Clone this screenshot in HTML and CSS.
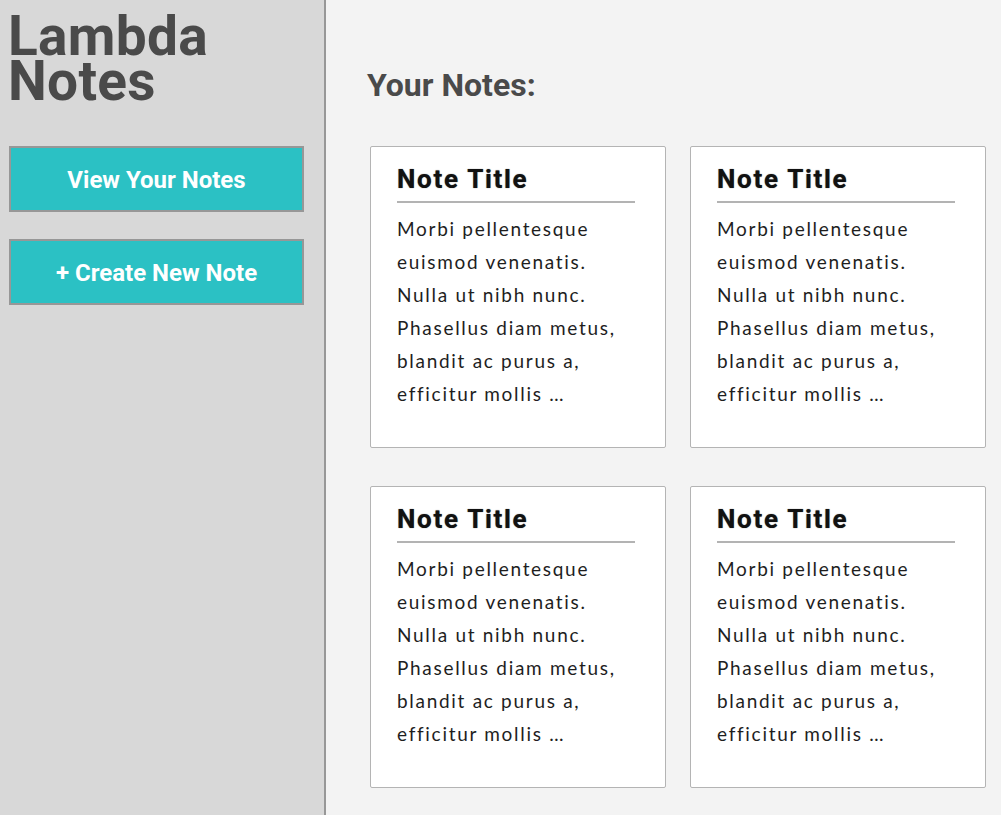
FILE: index.html
```html
<!DOCTYPE html>
<html>
<head>
<meta charset="utf-8">
<title>Lambda Notes</title>
<link rel="stylesheet" href="styles.css">
</head>
<body>
<div class="app">
  <aside class="sidebar">
    <h1 class="brand">Lambda<br>Notes</h1>
    <button class="nav-btn">View Your Notes</button>
    <button class="nav-btn">+ Create New Note</button>
  </aside>
  <main class="main">
    <h2 class="heading">Your Notes:</h2>
    <div class="grid">
      <div class="card">
        <h3 class="card-title">Note Title</h3>
        <p class="card-text">Morbi pellentesque euismod venenatis. Nulla ut nibh nunc. Phasellus diam metus, blandit ac purus a, efficitur mollis …</p>
      </div>
      <div class="card">
        <h3 class="card-title">Note Title</h3>
        <p class="card-text">Morbi pellentesque euismod venenatis. Nulla ut nibh nunc. Phasellus diam metus, blandit ac purus a, efficitur mollis …</p>
      </div>
      <div class="card">
        <h3 class="card-title">Note Title</h3>
        <p class="card-text">Morbi pellentesque euismod venenatis. Nulla ut nibh nunc. Phasellus diam metus, blandit ac purus a, efficitur mollis …</p>
      </div>
      <div class="card">
        <h3 class="card-title">Note Title</h3>
        <p class="card-text">Morbi pellentesque euismod venenatis. Nulla ut nibh nunc. Phasellus diam metus, blandit ac purus a, efficitur mollis …</p>
      </div>
    </div>
  </main>
</div>
</body>
</html>
```

FILE: styles.css
```css
* { box-sizing: border-box; }
html, body { margin: 0; padding: 0; }
body {
  font-family: Roboto, "Liberation Sans", sans-serif;
  background: #f3f3f3;
}
.app {
  display: flex;
  min-height: 815px;
}
.sidebar {
  width: 326px;
  flex: none;
  background: #d8d8d8;
  border-right: 2px solid #979797;
  padding: 14px 20px 0 9px;
  display: flex;
  flex-direction: column;
}
.brand {
  margin: 0 0 42px -1px;
  font-family: Roboto, sans-serif;
  font-weight: 700;
  font-size: 55px;
  line-height: 45px;
  letter-spacing: 0.3px;
  color: #4a4a4a;
}
.nav-btn {
  width: 295px;
  height: 66px;
  margin: 0 0 27px 0;
  padding: 1px 0 0 0;
  background: #2bc1c4;
  border: 2px solid #979797;
  color: #fff;
  font-family: Roboto, sans-serif;
  font-weight: 700;
  font-size: 24px;
  cursor: pointer;
}
.main {
  flex: 1;
  padding: 0 0 0 44px;
}
.heading {
  margin: 67px 0 42px -3px;
  font-family: Roboto, sans-serif;
  font-weight: 700;
  font-size: 32px;
  line-height: 37px;
  color: #4a4a4a;
}
.grid {
  display: grid;
  grid-template-columns: 296px 296px;
  column-gap: 24px;
  row-gap: 38px;
}
.card {
  height: 302px;
  background: #fff;
  border: 1px solid #b4b4b4;
  border-radius: 2px;
  padding: 17px 30px 0 26px;
}
.card-title {
  margin: 0;
  padding-bottom: 7px;
  border-bottom: 2px solid #b3b3b3;
  font-family: Roboto, sans-serif;
  font-weight: 700;
  font-size: 26px;
  line-height: 30px;
  letter-spacing: 1.7px;
  color: #111;
  text-shadow: 0 0 1px #555;
}
.card-text {
  margin: 9px 0 0 0;
  font-family: Lato, "Open Sans", sans-serif;
  font-size: 19px;
  line-height: 33px;
  letter-spacing: 1.7px;
  color: #1e1e1e;
}
```
